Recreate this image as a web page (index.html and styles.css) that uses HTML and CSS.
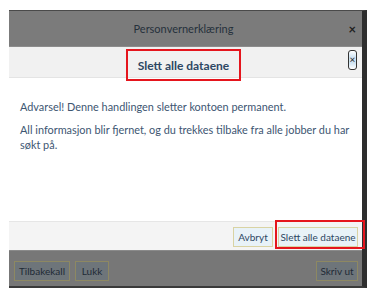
FILE: index.html
```html
<!DOCTYPE html>
<html lang="no">
<head>
    <meta charset="UTF-8">
    <meta name="viewport" content="width=device-width, initial-scale=1.0">
    <title>Slett alle dataene</title>
    <link rel="stylesheet" href="styles.css">
</head>
<body>
    <div class="frame">
        <!-- underlying dialog header, dimmed -->
        <div class="dlg-head">
            <span class="dlg-title">Personvernerklæring</span>
            <span class="dlg-close">×</span>
        </div>

        <!-- confirm modal -->
        <div class="modal">
            <div class="modal-head">
                <h2 class="modal-title mark">Slett alle dataene</h2>
                <span class="modal-close">×</span>
            </div>
            <div class="modal-body">
                <p>Advarsel! Denne handlingen sletter kontoen permanent.</p>
                <p>All informasjon blir fjernet, og du trekkes tilbake fra alle jobber du har søkt på.</p>
            </div>
            <div class="modal-foot">
                <button class="btn cancel">Avbryt</button>
                <span class="mark btn-mark">
                    <button class="btn danger">Slett alle dataene</button>
                </span>
            </div>
        </div>

        <!-- underlying dialog footer, dimmed -->
        <div class="dlg-foot">
            <button class="btn dim recall">Tilbakekall</button>
            <button class="btn dim close">Lukk</button>
            <button class="btn dim print">Skriv ut</button>
        </div>
    </div>
</body>
</html>
```

FILE: styles.css
```css
* {
    margin: 0;
    padding: 0;
    box-sizing: border-box;
}

body {
    font-family: 'Lato', 'Noto Sans', sans-serif;
    background: #fff;
    color: #3d5672;
}

.frame {
    margin: 10px 0 0 9px;
    width: 358px;
    border-top: 1px solid #4a4a4a;
    border-right: 5px solid #2e2e2e;
    border-bottom: 2px solid #3a3a3a;
}

.dlg-head {
    height: 36px;
    background: #7b7b7b;
    border-bottom: 1px solid #8c8c8c;
    display: grid;
    grid-template-columns: 1fr auto 1fr;
    align-items: center;
}

.dlg-title {
    grid-column: 2;
    font-size: 11px;
    color: #26313b;
    margin-right: 4px;
}

.dlg-close {
    justify-self: end;
    margin-right: 6px;
    font-size: 13px;
    font-weight: 700;
    color: #1f1f1f;
}

.modal {
    background: #fff;
}

.modal-head {
    height: 31px;
    background: #f1f1f1;
    border-bottom: 1px solid #e4e4e4;
    display: grid;
    grid-template-columns: 1fr auto 1fr;
    align-items: start;
}

.mark {
    border: 2px solid #e5151d;
}

.modal-title {
    grid-column: 2;
    width: 115px;
    height: 32px;
    margin: 2px 4px 0 0;
    font-size: 12px;
    font-weight: 700;
    color: #2d4763;
    display: flex;
    align-items: center;
    justify-content: center;
    position: relative;
    z-index: 1;
}

.modal-close {
    justify-self: end;
    margin: 3px 5px 0 0;
    width: 9px;
    height: 20px;
    border: 1.5px solid #333;
    border-radius: 3px;
    background: linear-gradient(#fff, #cfe3f2 35%, #cfe3f2 65%, #fff);
    font-size: 10px;
    line-height: 16px;
    text-align: center;
    color: #222;
    overflow: hidden;
}

.modal-body {
    height: 143px;
    padding: 21px 11px 0 11px;
    font-size: 10.9px;
    line-height: 15px;
}

.modal-body p {
    margin-bottom: 8px;
}

.modal-foot {
    height: 29px;
    background: #f4f4f4;
    border-top: 1px solid #e6e6e6;
    display: flex;
    justify-content: flex-end;
    align-items: flex-end;
    padding-bottom: 1px;
}

.btn {
    height: 20px;
    padding: 0;
    white-space: nowrap;
    font-family: inherit;
    font-size: 10px;
    color: #2d4763;
    background: #e8f2f8;
    border: 1px solid #d9d3a3;
}

.cancel {
    width: 40px;
    margin: 0 2px 2px 0;
}

.btn-mark {
    display: flex;
    margin-right: -3px;
    padding: 5px 5px 0 1px;
}

.danger {
    width: 80px;
}

.dlg-foot {
    height: 36px;
    background: #777;
    border-top: 1px solid #8a8a8a;
    display: flex;
    gap: 5px;
    padding: 10px 4px 0 5px;
    align-items: flex-start;
}

.dim {
    background: #6e757a;
    border-color: #8d8862;
    color: #1e2a36;
}

.recall {
    width: 56px;
}

.close {
    width: 34px;
}

.print {
    margin-left: auto;
    width: 42px;
}
```
